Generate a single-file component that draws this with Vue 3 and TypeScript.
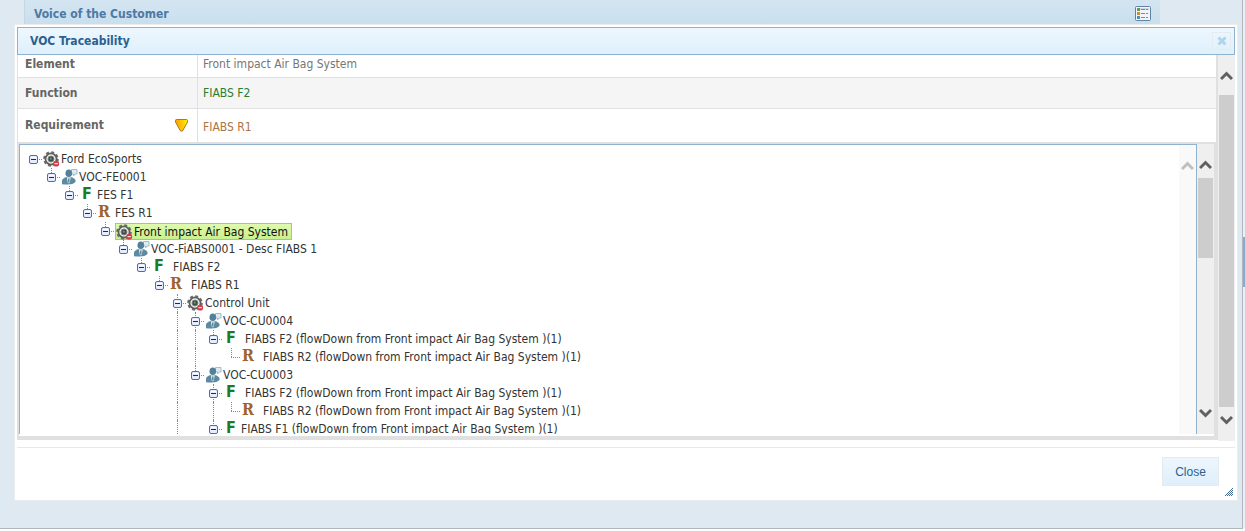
<script setup lang="ts">
import { computed, ref } from 'vue'

type Kind = 'system' | 'voc' | 'function' | 'requirement'

interface TreeRow {
  level: number
  kind: Kind
  text: string
  spaced?: boolean
  selected?: boolean
  leaf?: boolean
  guides?: number[]
}

const rows: TreeRow[] = [
  { level: 0, kind: 'system', text: 'Ford EcoSports' },
  { level: 1, kind: 'voc', text: 'VOC-FE0001' },
  { level: 2, kind: 'function', text: 'FES F1' },
  { level: 3, kind: 'requirement', text: 'FES R1' },
  { level: 4, kind: 'system', text: 'Front impact Air Bag System', selected: true },
  { level: 5, kind: 'voc', text: 'VOC-FiABS0001 - Desc FIABS 1' },
  { level: 6, kind: 'function', text: 'FIABS F2', spaced: true },
  { level: 7, kind: 'requirement', text: 'FIABS R1', spaced: true },
  { level: 8, kind: 'system', text: 'Control Unit', guides: [8] },
  { level: 9, kind: 'voc', text: 'VOC-CU0004', guides: [8, 9] },
  { level: 10, kind: 'function', text: 'FIABS F2 (flowDown from Front impact Air Bag System )(1)', spaced: true, guides: [8, 9] },
  { level: 11, kind: 'requirement', text: 'FIABS R2 (flowDown from Front impact Air Bag System )(1)', spaced: true, leaf: true, guides: [8, 9] },
  { level: 9, kind: 'voc', text: 'VOC-CU0003', guides: [8] },
  { level: 10, kind: 'function', text: 'FIABS F2 (flowDown from Front impact Air Bag System )(1)', spaced: true, guides: [8, 10] },
  { level: 11, kind: 'requirement', text: 'FIABS R2 (flowDown from Front impact Air Bag System )(1)', spaced: true, leaf: true, guides: [8, 10] },
  { level: 10, kind: 'function', text: 'FIABS F1 (flowDown from Front impact Air Bag System )(1)', guides: [8, 10] },
]

const collapsed = ref<number[]>([])

const visibleRows = computed(() => {
  const result: { row: TreeRow; index: number }[] = []
  let hiddenBelow = Infinity
  rows.forEach((row, index) => {
    if (row.level > hiddenBelow) return
    hiddenBelow = collapsed.value.includes(index) ? row.level : Infinity
    result.push({ row, index })
  })
  return result
})

function toggle(index: number): void {
  collapsed.value = collapsed.value.includes(index)
    ? collapsed.value.filter((i) => i !== index)
    : [...collapsed.value, index]
}

function guideClass(row: TreeRow, column: number): Record<string, boolean> {
  const through = row.guides?.includes(column) ?? false
  return { through, up: column === row.level && row.level > 0 }
}
</script>

<template>
  <div class="page">
    <header class="page-bar">
      <h1>Voice of the Customer</h1>
      <button class="list-button" type="button" aria-label="List view">
        <svg width="16" height="15" viewBox="0 0 16 15">
          <rect x="0.5" y="0.5" width="15" height="14" rx="1" fill="#f1f5f8" stroke="#5f82a6" />
          <path d="M5 2h9v2H5z" fill="#d3d8df" />
          <rect x="2" y="2" width="3" height="3" fill="#5c9d63" />
          <rect x="2" y="6" width="3" height="3" fill="#d28a37" />
          <rect x="2" y="10" width="3" height="3" fill="#4194c8" />
          <path d="M6 3.5h7M6 7.5h7M6 11.5h7" stroke="#7489a4" stroke-dasharray="4 1" />
        </svg>
      </button>
    </header>
    <div class="splitter"><span></span></div>

    <section class="dialog" role="dialog" aria-label="VOC Traceability">
      <div class="title-bar">
        <h2>VOC Traceability</h2>
        <button class="close-x" type="button" aria-label="Close dialog">
          <svg width="10" height="10" viewBox="0 0 10 10">
            <path d="M1.5 1.5L8.5 8.5M8.5 1.5L1.5 8.5" stroke="#b3d3ea" stroke-width="3" />
          </svg>
        </button>
      </div>

      <div class="body">
        <div class="main">
          <table>
            <tbody>
              <tr class="first">
                <th scope="row">Element</th>
                <td>Front impact Air Bag System</td>
              </tr>
              <tr class="shaded">
                <th scope="row">Function</th>
                <td class="green">FIABS F2</td>
              </tr>
              <tr class="last">
                <th scope="row">
                  <div class="label">
                    <span>Requirement</span>
                    <svg width="13" height="13" viewBox="0 0 13 13">
                      <defs>
                        <linearGradient id="marker" x1="0" x2="1" y1="0" y2="0">
                          <stop offset="0" stop-color="#ff9c00" />
                          <stop offset="1" stop-color="#fff200" />
                        </linearGradient>
                      </defs>
                      <path d="M0.5 1.5Q0.5 0.5 1.5 0.5H11.5Q12.5 0.5 12.5 1.5V3L7.5 12H5.5L0.5 3Z" fill="url(#marker)" stroke="#a9762b" />
                    </svg>
                  </div>
                </th>
                <td class="brown">FIABS R1</td>
              </tr>
            </tbody>
          </table>

          <div class="tree-frame">
            <div class="tree-panel">
              <ul class="tree">
                <li v-for="{ row, index } in visibleRows" :key="index" class="row">
                  <span v-for="column in row.level" :key="column" class="cell" :class="guideClass(row, column - 1)"></span>
                  <span class="cell node" :class="[guideClass(row, row.level), { leaf: row.leaf, root: row.level === 8 }]">
                    <button v-if="!row.leaf" type="button" class="expander" :aria-label="'Toggle ' + row.text" @click="toggle(index)">
                      <svg width="9" height="9" viewBox="0 0 9 9">
                        <rect x="0.5" y="0.5" width="8" height="8" rx="1.5" fill="#e8edfb" stroke="#456bd2" />
                        <path d="M2 2.5h5" stroke="#fff" />
                        <path d="M2 4.5h5" stroke="#13277f" />
                        <path v-if="collapsed.includes(index)" d="M4.5 2v5" stroke="#13277f" />
                      </svg>
                    </button>
                  </span>
                  <span class="item" :class="{ selected: row.selected }">
                    <svg v-if="row.kind === 'system'" class="icon" width="18" height="16" viewBox="0 0 18 16">
                      <circle cx="8" cy="8" r="6.8" fill="none" stroke="#6c6f6c" stroke-width="2" stroke-dasharray="3 2.34" />
                      <circle cx="8" cy="8" r="5.6" fill="#eceeec" stroke="#5c5f5c" stroke-width="1.8" />
                      <circle cx="8" cy="8" r="3" fill="#3f4f46" stroke="#7d8880" />
                      <circle cx="7.8" cy="7.8" r="1" fill="#7d9184" />
                      <circle cx="13.2" cy="12.7" r="2.9" fill="#d83a3e" />
                      <path d="M11.5 12.7h3.4" stroke="#fff" />
                    </svg>
                    <svg v-else-if="row.kind === 'voc'" class="icon" width="18" height="16" viewBox="0 0 18 16">
                      <path d="M10.5 0.5H16V5H14L12.5 7V5H10.5Z" fill="#dceaf2" stroke="#a3bfce" />
                      <ellipse cx="7.8" cy="4.3" rx="3.3" ry="3.8" fill="#54809a" />
                      <path d="M1 15.2V11.5Q1.5 9 6 8H9.5Q14 9 14.5 11.5V13Q12 15.5 7 15.5Q3 15.5 1 15.2Z" fill="#5b8aa3" />
                      <path d="M5.8 8.3h4L8.8 13.5L7.8 14.5L6.8 13.5z" fill="#e5eef3" />
                      <path d="M7.8 9.5v4" stroke="#54809a" stroke-width="1.4" />
                    </svg>
                    <span v-else class="letter" :class="row.kind">{{ row.kind === 'function' ? 'F' : 'R' }}</span>
                    <span class="text" :class="{ spaced: row.spaced }">{{ row.text }}</span>
                  </span>
                </li>
              </ul>
              <div class="scrollbar faint">
                <svg width="13" height="10" viewBox="0 0 13 10"><path d="M1 8L6.5 2.5L12 8" /></svg>
              </div>
            </div>
            <div class="scrollbar inner">
              <svg width="13" height="10" viewBox="0 0 13 10"><path d="M1 8L6.5 2.5L12 8" /></svg>
              <span class="thumb"></span>
              <svg width="13" height="10" viewBox="0 0 13 10"><path d="M1 2L6.5 7.5L12 2" /></svg>
            </div>
          </div>
        </div>
        <div class="scrollbar outer">
          <svg width="13" height="10" viewBox="0 0 13 10"><path d="M1 8L6.5 2.5L12 8" /></svg>
          <span class="thumb"></span>
          <svg width="13" height="10" viewBox="0 0 13 10"><path d="M1 2L6.5 7.5L12 2" /></svg>
        </div>
      </div>

      <footer>
        <button class="close-button" type="button">Close</button>
      </footer>
      <svg class="grip" width="8" height="8" viewBox="0 0 8 8">
        <path d="M0 8L8 0M2 8L8 2M4 8L8 4M6 8L8 6" stroke="#2f5f90" stroke-width="0.9" />
      </svg>
    </section>
  </div>
</template>

<style>
body {
  margin: 0;
  background: #fcfdfe;
}
</style>

<style scoped>
* {
  box-sizing: border-box;
}
.page {
  position: relative;
  height: calc(100vh - 2px);
  margin-right: 2px;
  border-right: 1px solid #b3b7bc;
  border-bottom: 1px solid #b3b7bc;
  background: #dfe9f1;
  color: #333;
  font: 12px/18px "DejaVu Sans Condensed", "Noto Sans", sans-serif;
}
button {
  padding: 0;
  border: 0;
  background: none;
  font: inherit;
  cursor: pointer;
}
svg {
  display: block;
  flex: none;
}
.page-bar {
  display: flex;
  align-items: center;
  justify-content: space-between;
  height: 24px;
  margin: 0 82px 0 24px;
  padding: 3px 9px 0 9px;
  border-left: 1px solid #c6d6e3;
  background: linear-gradient(#d4e5f1, #c9dfee);
}
h1,
h2 {
  margin: 0;
  font-size: 12px;
  font-weight: bold;
}
h1 {
  color: #4d79a4;
}
.splitter {
  position: absolute;
  top: 0;
  right: -3px;
  bottom: 0;
  width: 2px;
  background: #e6f1fb;
}
.splitter span {
  display: block;
  height: 50px;
  margin-top: 237px;
  background: #84aed0;
}
.dialog {
  position: absolute;
  top: 24px;
  right: 4px;
  bottom: 27px;
  left: 14px;
  display: flex;
  flex-direction: column;
  padding: 2px;
  border: 1px solid #ececec;
  background: #fff;
}
.title-bar {
  display: flex;
  align-items: center;
  justify-content: space-between;
  height: 28px;
  padding: 0 3px 0 12px;
  border: 1px solid #8fb3cf;
  background: linear-gradient(#eef7fe, #def0fc);
}
h2 {
  color: #2d5f8f;
}
.close-x {
  display: grid;
  place-items: center;
  width: 19px;
  height: 18px;
  border: 1px solid #e5ecf1;
}
.body {
  display: flex;
  flex: 1;
  min-height: 0;
}
.main {
  display: flex;
  flex: 1;
  flex-direction: column;
  min-width: 0;
  margin-bottom: 1px;
}
table {
  width: 100%;
  border: solid #e0e0e0;
  border-width: 0 2px 0 1px;
  border-spacing: 0;
  color: #767676;
}
th,
td {
  padding: 0 5px;
  border-bottom: 1px solid #e0e0e0;
  text-align: left;
}
th {
  width: 180px;
  padding: 0 7px;
  border-right: 1px solid #e0e0e0;
  color: #666;
}
.first > * {
  height: 23px;
  padding-bottom: 4px;
}
.shaded > * {
  height: 31px;
  background: #f5f5f5;
}
.last > * {
  height: 33px;
  border-bottom: 0;
}
.last td {
  padding-top: 2px;
}
.label {
  display: flex;
  align-items: center;
  justify-content: space-between;
  padding-right: 2px;
}
.label span {
  padding-bottom: 2px;
}
.green {
  color: #2a7d2e;
}
.brown {
  color: #ab7346;
}
.tree-frame {
  display: flex;
  flex: 1;
  min-height: 0;
  padding-bottom: 2px;
  border: solid #e0e0e0;
  border-width: 2px 4px 4px 2px;
}
.tree-panel {
  display: flex;
  flex: 1;
  min-width: 0;
  border: 1px solid #8fb3cf;
  border-bottom: 0;
}
.tree {
  flex: 1;
  min-width: 0;
  margin: 0;
  padding: 5px 0 0 5px;
  overflow: hidden;
  list-style: none;
}
.row {
  display: flex;
  height: 18px;
  white-space: nowrap;
}
.cell {
  position: relative;
  flex: none;
  width: 18px;
}
.cell.up::before,
.cell.through::before {
  position: absolute;
  top: 0;
  left: 8px;
  border-left: 1px dotted #888;
  content: "";
}
.cell.up::before {
  height: 9px;
}
.cell.through::before {
  height: 18px;
}
.node {
  display: flex;
  align-items: center;
  padding-left: 4px;
  background: linear-gradient(90deg, #888 1px, transparent 1px) 14px 9px / 2px 1px repeat-x;
  background-clip: content-box;
}
.leaf {
  padding-left: 8px;
}
.expander {
  position: relative;
  background: #fff;
}
.item {
  display: flex;
  align-items: center;
}
.selected {
  margin-top: 1px;
  padding-right: 3px;
  border: 1px solid #a2cf63;
  background: linear-gradient(#dffaae, #c9f090);
  color: #111;
}
.icon {
  width: 18px;
}
.letter {
  width: 18px;
  padding: 0 0 2px 2px;
  font: bold 16px/16px "DejaVu Sans Condensed", sans-serif;
}
.letter.function {
  padding-left: 3px;
  color: #1e7a22;
}
.letter.requirement {
  padding-left: 1px;
  color: #a0622d;
  font-family: "DejaVu Serif Condensed", "DejaVu Serif", serif;
}
.spaced {
  padding-left: 4px;
}
.scrollbar {
  display: flex;
  flex: none;
  flex-direction: column;
  align-items: center;
  width: 17px;
  background: #efefef;
}
.scrollbar path {
  fill: none;
  stroke: #606060;
  stroke-width: 3;
}
.faint {
  padding-top: 16px;
  background: #f9f9f9;
}
.faint path {
  stroke: #bfbfbf;
}
.thumb {
  width: 15px;
  background: #cdcdcd;
}
.inner {
  padding: 16px 0;
}
.inner .thumb {
  height: 80px;
  margin: 8px 0 auto;
}
.outer {
  padding: 16px 0;
}
.outer .thumb {
  flex: 1;
  margin: 14px 0 8px;
}
footer {
  display: flex;
  justify-content: flex-end;
  margin-top: 6px;
  padding: 9px 16px 12px;
  border-top: 1px solid #e8e8e8;
}
.close-button {
  width: 57px;
  height: 29px;
  border: 1px solid #e3ebf1;
  background: linear-gradient(#edf6fd, #dfeffb);
  color: #2d5f8f;
  font: 12px "Liberation Sans", Arial, sans-serif;
}
.grip {
  position: absolute;
  right: 4px;
  bottom: 4px;
}
</style>
